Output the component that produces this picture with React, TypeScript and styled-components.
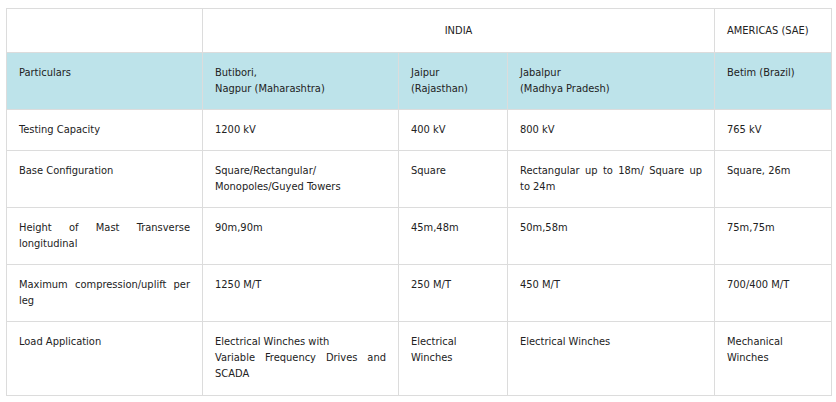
import styled, { createGlobalStyle } from 'styled-components';

const GlobalStyle = createGlobalStyle`
  html, body {
    margin: 0;
    padding: 0;
    background: #ffffff;
  }
  body {
    font-family: "DejaVu Sans Condensed", "DejaVu Sans", Verdana, sans-serif;
    font-stretch: semi-condensed;
  }
`;

const Page = styled.div`
  padding: 8px 5px 6px 6px;
`;

const Table = styled.table`
  width: 825px;
  border-collapse: collapse;
  table-layout: fixed;
  font-size: 11px;
  line-height: 16px;
  color: #222222;
`;

const RegionRow = styled.tr`
  height: 44px;
`;

const RegionCell = styled.th<{ $center?: boolean }>`
  border: 1px solid #dcdcdc;
  padding: 0 12px;
  font-weight: normal;
  vertical-align: middle;
  text-align: ${(p) => (p.$center ? 'center' : 'left')};
`;

const HeadRow = styled.tr`
  background: #bde3ea;
`;

const HeadCell = styled.th`
  border: 1px solid #dcdcdc;
  padding: 12px;
  font-weight: normal;
  text-align: left;
  vertical-align: top;
`;

const Cell = styled.td<{ $tall?: boolean }>`
  border: 1px solid #dcdcdc;
  padding: 12px 12px ${(p) => (p.$tall ? 13 : 12)}px;
  text-align: justify;
  vertical-align: top;
`;

type Row = { label: string; values: React.ReactNode[]; tall?: boolean };

const rows: Row[] = [
  { label: 'Testing Capacity', values: ['1200 kV', '400 kV', '800 kV', '765 kV'] },
  {
    label: 'Base Configuration',
    values: [
      <>Square/Rectangular/<br />Monopoles/Guyed Towers</>,
      'Square',
      'Rectangular up to 18m/ Square up to 24m',
      'Square, 26m',
    ],
  },
  {
    label: 'Height of Mast Transverse longitudinal',
    values: ['90m,90m', '45m,48m', '50m,58m', '75m,75m'],
  },
  {
    label: 'Maximum compression/uplift per leg',
    values: ['1250 M/T', '250 M/T', '450 M/T', '700/400 M/T'],
  },
  {
    label: 'Load Application',
    tall: true,
    values: [
      <>Electrical Winches with<br />Variable Frequency Drives and SCADA</>,
      'Electrical Winches',
      'Electrical Winches',
      'Mechanical Winches',
    ],
  },
];

const App = () => {
  return (
    <Page>
      <GlobalStyle />
      <Table>
        <colgroup>
          <col style={{ width: 196 }} />
          <col style={{ width: 196 }} />
          <col style={{ width: 109 }} />
          <col style={{ width: 207 }} />
          <col style={{ width: 117 }} />
        </colgroup>
        <thead>
          <RegionRow>
            <RegionCell />
            <RegionCell colSpan={3} $center>INDIA</RegionCell>
            <RegionCell>AMERICAS (SAE)</RegionCell>
          </RegionRow>
          <HeadRow>
            <HeadCell>Particulars</HeadCell>
            <HeadCell>Butibori,<br />Nagpur (Maharashtra)</HeadCell>
            <HeadCell>Jaipur<br />(Rajasthan)</HeadCell>
            <HeadCell>Jabalpur<br />(Madhya Pradesh)</HeadCell>
            <HeadCell>Betim (Brazil)</HeadCell>
          </HeadRow>
        </thead>
        <tbody>
          {rows.map((row) => (
            <tr key={row.label}>
              <Cell $tall={row.tall}>{row.label}</Cell>
              {row.values.map((v, i) => (
                <Cell key={i} $tall={row.tall}>{v}</Cell>
              ))}
            </tr>
          ))}
        </tbody>
      </Table>
    </Page>
  );
};

export default App;
